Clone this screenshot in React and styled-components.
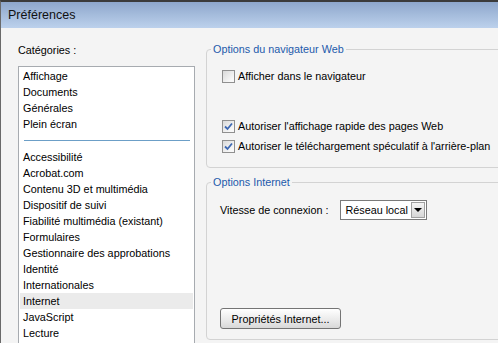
import React from "react";
import styled, {createGlobalStyle, css} from "styled-components";

const GlobalStyle = createGlobalStyle`
    html, body {
        margin: 0;
        padding: 0;
        background: #f4f4f4;
    }
    body {
        font-family: "Liberation Sans", Arial, sans-serif;
        font-size: 10.8px;
        color: #000;
    }
`;

const categories = [
    ["Affichage", "Documents", "Générales", "Plein écran"],
    [
        "Accessibilité",
        "Acrobat.com",
        "Contenu 3D et multimédia",
        "Dispositif de suivi",
        "Fiabilité multimédia (existant)",
        "Formulaires",
        "Gestionnaire des approbations",
        "Identité",
        "Internationales",
        "Internet",
        "JavaScript",
        "Lecture",
    ],
];

const Window = styled.div`
    width: 498px;
    height: 343px;
    overflow: hidden;
    display: flex;
    flex-direction: column;
    border-top: 2px solid #3b3b3b;
    border-left: 1px solid #6a6a6a;
    box-sizing: border-box;
    background: #f4f4f4;
`;

const TitleBar = styled.div`
    height: 26px;
    flex: none;
    display: flex;
    align-items: center;
    padding-left: 7px;
    font-size: 12.5px;
    color: #111;
    background: linear-gradient(#8ea7cc, #bcd1ec);
`;

const Body = styled.div`
    flex: 1;
    display: flex;
    gap: 11px;
    padding: 16px 0 0 17px;
    min-height: 0;
`;

const LeftColumn = styled.div`
    width: 177px;
    flex: none;
    display: flex;
    flex-direction: column;
`;

const Label = styled.div`
    line-height: 13px;
    margin-bottom: 9px;
`;

const ListBox = styled.div`
    flex: 1;
    background: #fff;
    border: 1px solid #a7abb0;
    border-bottom: none;
    padding: 1px 1px 0;
`;

const ListItem = styled.div`
    height: 16px;
    line-height: 16px;
    padding-left: 3px;
    white-space: nowrap;
    ${props => props.selected && css`
        background: #ebebeb;
    `};
`;

const Separator = styled.div`
    height: 17px;
    display: flex;
    align-items: center;
    padding: 0 3px 0 4px;

    &::after {
        content: "";
        flex: 1;
        height: 1px;
        background: #6c9fc7;
    }
`;

const RightColumn = styled.div`
    flex: 1;
    display: flex;
    flex-direction: column;
    gap: 8px;
    margin-top: -1px;
    margin-right: -12px;
`;

const Group = styled.fieldset`
    margin: 0;
    padding: 0;
    border: 1px solid #d3d3d3;
    border-radius: 4px;
    height: ${props => props.height}px;
    box-sizing: border-box;
`;

const Legend = styled.legend`
    margin-left: 4px;
    padding: 0 2px;
    color: #1d5aab;
    line-height: 13px;
`;

const GroupContent = styled.div`
    display: flex;
    flex-direction: column;
    padding: ${props => props.padding};
`;

const CheckRow = styled.label`
    display: flex;
    align-items: center;
    gap: 3px;
    height: 20px;
    white-space: nowrap;
    ${props => props.spaced && css`
        margin-top: 30px;
    `};
`;

const Box = styled.span`
    width: 13px;
    height: 13px;
    box-sizing: border-box;
    border: 1px solid #8f8f8f;
    background: linear-gradient(135deg, #d9d9d9, #f8f8f8 80%);
    display: flex;
    align-items: center;
    justify-content: center;
`;

const Checkbox = ({checked}) => (
    <Box>
        {checked && (
            <svg width="9" height="9" viewBox="0 0 9 9">
                <path d="M1 4.5 L3.5 7 L8 1.5" fill="none" stroke="#3e68b2" strokeWidth="1.8"/>
            </svg>
        )}
    </Box>
);

const FieldRow = styled.div`
    display: flex;
    align-items: center;
    gap: 12px;
    height: 22px;
`;

const Select = styled.div`
    width: 87px;
    height: 20px;
    box-sizing: border-box;
    border: 1px solid #7a7a7a;
    background: #fff;
    display: flex;
    align-items: center;
    justify-content: space-between;
    padding: 0 1px 0 4px;
    white-space: nowrap;
`;

const ArrowButton = styled.span`
    width: 14px;
    height: 16px;
    flex: none;
    box-sizing: border-box;
    border: 1px solid #a0a0a0;
    background: linear-gradient(#f4f4f4, #d6d6d6);
    display: flex;
    align-items: center;
    justify-content: center;

    &::after {
        content: "";
        border-left: 4px solid transparent;
        border-right: 4px solid transparent;
        border-top: 4px solid #000;
    }
`;

const Button = styled.button`
    align-self: flex-start;
    width: 121px;
    height: 21px;
    margin-top: 87px;
    font: inherit;
    color: #000;
    border: 1px solid #747474;
    border-radius: 3px;
    background: linear-gradient(#ffffff, #e9e9e9 60%, #d8d8d8);
    padding: 0;
`;

const App = () => {
    return (
        <>
            <GlobalStyle/>
            <Window>
                <TitleBar>Préférences</TitleBar>
                <Body>
                    <LeftColumn>
                        <Label>Catégories :</Label>
                        <ListBox>
                            {categories[0].map(name => <ListItem key={name}>{name}</ListItem>)}
                            <Separator/>
                            {categories[1].map(name => (
                                <ListItem key={name} selected={name === "Internet"}>{name}</ListItem>
                            ))}
                        </ListBox>
                    </LeftColumn>
                    <RightColumn>
                        <Group height={125}>
                            <Legend>Options du navigateur Web</Legend>
                            <GroupContent padding="10px 0 0 15px">
                                <CheckRow><Checkbox/>Afficher dans le navigateur</CheckRow>
                                <CheckRow spaced><Checkbox checked/>Autoriser l'affichage rapide des pages Web</CheckRow>
                                <CheckRow><Checkbox checked/>Autoriser le téléchargement spéculatif à l'arrière-plan</CheckRow>
                            </GroupContent>
                        </Group>
                        <Group height={164}>
                            <Legend>Options Internet</Legend>
                            <GroupContent padding="10px 0 0 13px">
                                <FieldRow>
                                    <span>Vitesse de connexion :</span>
                                    <Select>
                                        <span>Réseau local</span>
                                        <ArrowButton/>
                                    </Select>
                                </FieldRow>
                                <Button>Propriétés Internet...</Button>
                            </GroupContent>
                        </Group>
                    </RightColumn>
                </Body>
            </Window>
        </>
    );
};

export default App;
